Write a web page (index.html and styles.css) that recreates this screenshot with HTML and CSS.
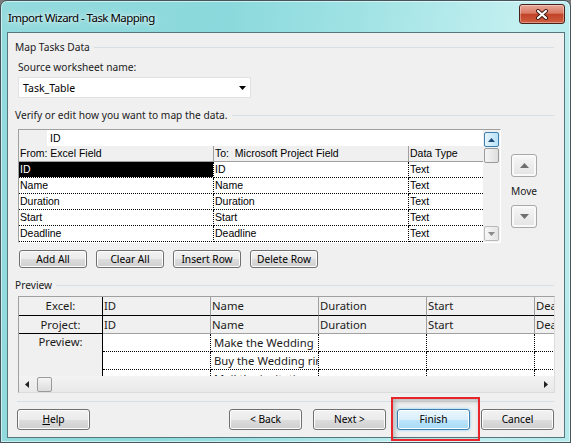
FILE: index.html
```html
<!DOCTYPE html>
<html lang="en">
<head>
  <meta charset="utf-8">
  <title>Import Wizard - Task Mapping</title>
  <link rel="stylesheet" href="styles.css">
</head>
<body>
  <div class="window">
    <div class="titlebar">
      <span class="title">Import Wizard - Task Mapping</span>
      <div class="close">
        <svg width="14" height="11" viewBox="0 0 14 11">
          <path d="M3 2 L11 9 M11 2 L3 9" stroke="#3a1810" stroke-width="4" stroke-linecap="round"/>
          <path d="M3 2 L11 9 M11 2 L3 9" stroke="#fff" stroke-width="2.2" stroke-linecap="round"/>
        </svg>
      </div>
    </div>

    <div class="client">
      <!-- Source sheet -->
      <div class="group-title first">Map Tasks Data</div>
      <div class="field-label">Source worksheet name:</div>
      <div class="combo">
        <span>Task_Table</span>
        <svg width="7" height="4" viewBox="0 0 7 4"><path d="M0 0 H7 L3.5 4 Z" fill="#000"/></svg>
      </div>

      <!-- Field mapping -->
      <div class="group-title">Verify or edit how you want to map the data.</div>
      <div class="mapping">
        <div class="map-grid">
          <div class="map-body">
            <div class="edit-row">
              <div class="edit-corner"></div>
              <div class="edit-value">ID</div>
            </div>
            <div class="map-row map-head">
              <div class="col-from">From: Excel Field</div>
              <div class="col-to">To:  Microsoft Project Field</div>
              <div class="col-type">Data Type</div>
            </div>
            <div class="map-row">
              <div class="col-from selected">ID</div>
              <div class="col-to">ID</div>
              <div class="col-type">Text</div>
            </div>
            <div class="map-row">
              <div class="col-from">Name</div>
              <div class="col-to">Name</div>
              <div class="col-type">Text</div>
            </div>
            <div class="map-row">
              <div class="col-from">Duration</div>
              <div class="col-to">Duration</div>
              <div class="col-type">Text</div>
            </div>
            <div class="map-row">
              <div class="col-from">Start</div>
              <div class="col-to">Start</div>
              <div class="col-type">Text</div>
            </div>
            <div class="map-row">
              <div class="col-from">Deadline</div>
              <div class="col-to">Deadline</div>
              <div class="col-type">Text</div>
            </div>
          </div>
          <div class="vscroll">
            <div class="sb-btn sb-hot">
              <svg width="7" height="4" viewBox="0 0 7 4"><path d="M0 4 H7 L3.5 0 Z" fill="#1d4a78"/></svg>
            </div>
            <div class="sb-thumb"></div>
            <div class="sb-track"></div>
            <div class="sb-btn">
              <svg width="7" height="4" viewBox="0 0 7 4"><path d="M0 0 H7 L3.5 4 Z" fill="#8a8a8a"/></svg>
            </div>
          </div>
        </div>

        <div class="move">
          <div class="move-btn">
            <svg width="9" height="5" viewBox="0 0 9 5"><path d="M0 5 H9 L4.5 0 Z" fill="#707070"/></svg>
          </div>
          <div class="move-label">Move</div>
          <div class="move-btn">
            <svg width="9" height="5" viewBox="0 0 9 5"><path d="M0 0 H9 L4.5 5 Z" fill="#707070"/></svg>
          </div>
        </div>
      </div>

      <div class="grid-buttons">
        <button class="btn btn-small">Add All</button>
        <button class="btn btn-small">Clear All</button>
        <button class="btn btn-small">Insert Row</button>
        <button class="btn btn-small">Delete Row</button>
      </div>

      <!-- Preview -->
      <div class="group-title">Preview</div>
      <div class="preview">
        <div class="preview-view">
          <div class="pcol pcol-head">
            <div class="pc-excel">Excel:</div>
            <div class="pc-project">Project:</div>
            <div class="pc-preview">Preview:</div>
          </div>
          <div class="pcol">
            <div class="pc-excel">ID</div>
            <div class="pc-project">ID</div>
            <div class="pc-data"></div>
            <div class="pc-data"></div>
            <div class="pc-data"></div>
          </div>
          <div class="pcol">
            <div class="pc-excel">Name</div>
            <div class="pc-project">Name</div>
            <div class="pc-data">Make the Wedding</div>
            <div class="pc-data">Buy the Wedding rings</div>
            <div class="pc-data">Mail the invitations</div>
          </div>
          <div class="pcol">
            <div class="pc-excel">Duration</div>
            <div class="pc-project">Duration</div>
            <div class="pc-data"></div>
            <div class="pc-data"></div>
            <div class="pc-data"></div>
          </div>
          <div class="pcol">
            <div class="pc-excel">Start</div>
            <div class="pc-project">Start</div>
            <div class="pc-data"></div>
            <div class="pc-data"></div>
            <div class="pc-data"></div>
          </div>
          <div class="pcol">
            <div class="pc-excel">Deadline</div>
            <div class="pc-project">Deadline</div>
            <div class="pc-data"></div>
            <div class="pc-data"></div>
            <div class="pc-data"></div>
          </div>
        </div>
        <div class="hscroll">
          <svg width="4" height="7" viewBox="0 0 4 7"><path d="M4 0 V7 L0 3.5 Z" fill="#222"/></svg>
          <div class="hs-thumb"></div>
          <svg class="hs-right" width="4" height="7" viewBox="0 0 4 7"><path d="M0 0 V7 L4 3.5 Z" fill="#222"/></svg>
        </div>
      </div>

      <div class="separator"></div>

      <div class="footer">
        <button class="btn btn-wide"><u>H</u>elp</button>
        <div class="nav">
          <button class="btn btn-wide">&lt; Back</button>
          <button class="btn btn-wide">Next &gt;</button>
          <div class="finish-wrap">
            <button class="btn btn-wide btn-default">Finish</button>
            <div class="callout"></div>
          </div>
          <button class="btn btn-wide">Cancel</button>
        </div>
      </div>
    </div>
  </div>
</body>
</html>
```

FILE: styles.css
```css
* {
  box-sizing: border-box;
}

body {
  margin: 0;
  background: #7a7a7a;
  font-family: "Noto Sans", "Open Sans", sans-serif;
  font-size: 10.2px;
  color: #1b1b1b;
}

/* Aero frame */
.window {
  width: 571px;
  height: 443px;
  border: 1px solid #44565b;
  border-radius: 7px 7px 0 0;
  background: linear-gradient(100deg, #93dadd 0%, #8bd9dc 35%, #9fe2e4 55%, #c2eff0 80%, #b3e9eb 100%);
  box-shadow: inset 0 0 0 1px rgba(255, 255, 255, 0.55);
  display: flex;
  flex-direction: column;
}

.titlebar {
  height: 31px;
  flex: none;
  display: flex;
  align-items: flex-start;
}

.title {
  margin: 8px 0 0 7px;
  font-size: 11.5px;
  letter-spacing: -0.55px;
  line-height: 18px;
  color: #000;
  text-shadow: 0 0 8px #fff, 0 0 3px rgba(255, 255, 255, 0.8);
}

.close {
  width: 46px;
  height: 20px;
  margin: 3px 5px 0 auto;
  border: 1px solid #4a2018;
  border-radius: 3px;
  background: linear-gradient(#e9a899 0%, #d97a64 45%, #c24328 52%, #cf5e40 100%);
  box-shadow: inset 0 0 0 1px rgba(255, 255, 255, 0.35);
  display: flex;
  align-items: center;
  justify-content: center;
}

/* Dialog body */
.client {
  flex: 1;
  margin: 0 5px 4px 6px;
  border: 1px solid #56767d;
  background: #f0f0f0;
  padding: 0 10px 0 7px;
  display: flex;
  flex-direction: column;
}

.group-title {
  display: flex;
  align-items: center;
  height: 14px;
  line-height: 14px;
  margin-top: 10px;
  white-space: nowrap;
}
.group-title::after {
  content: "";
  flex: 1;
  height: 1px;
  margin-left: 4px;
  background: #d5dfe5;
}
.group-title.first {
  margin-top: 7px;
}

.field-label {
  margin: 6px 0 0 3px;
  line-height: 14px;
}

.combo {
  margin: 3px 0 0 3px;
  width: 233px;
  height: 21px;
  border: 1px solid #e2e2e2;
  background: #fff;
  padding: 0 4px 0 4px;
  display: flex;
  align-items: center;
  justify-content: space-between;
  font-size: 10.5px;
  color: #000;
}

/* Mapping grid */
.mapping {
  display: flex;
  margin: 7px 0 0 3px;
}

.map-grid {
  width: 483px;
  height: 114px;
  border: 1px solid;
  border-color: #a0a0a0 #fff #fff #a0a0a0;
  background: #fff;
  display: flex;
}

.map-body {
  width: 464px;
  font-family: "Liberation Sans", Arial, sans-serif;
  font-size: 10.5px;
  color: #000;
}

.edit-row {
  display: flex;
  height: 16px;
  line-height: 16px;
}
.edit-corner {
  width: 28px;
  background: #f0f0f0;
}
.edit-value {
  flex: 1;
  padding-left: 3px;
}

.map-row {
  display: flex;
  height: 16px;
  line-height: 15px;
}
.map-row > div {
  border-bottom: 1px dotted #000;
  padding-left: 1px;
  white-space: pre;
  overflow: hidden;
}
.col-from,
.col-to {
  width: 195px;
  border-right: 1px dotted #000;
}
.col-type {
  flex: 1;
}
.map-row .selected {
  background: #000;
  background-clip: padding-box;
  color: #fff;
}

.map-head {
  background: #f0f0f0;
}
.map-head > div {
  border-bottom: 1px solid #a0a0a0;
}
.map-head .col-from,
.map-head .col-to {
  border-right: 1px solid #a0a0a0;
}

.vscroll {
  width: 17px;
  padding: 2px 1px 1px 1px;
  background: #f0f0f0;
  display: flex;
  flex-direction: column;
}
.sb-btn {
  height: 15px;
  border: 1px solid #b9b9b9;
  border-radius: 2px;
  background: linear-gradient(90deg, #f7f7f7, #e4e4e4);
  display: flex;
  align-items: center;
  justify-content: center;
}
.sb-btn.sb-hot {
  border-color: #3c7fb1;
  background: linear-gradient(90deg, #e5f5fd, #b9e2f7);
}
.sb-thumb {
  height: 15px;
  margin-top: 1px;
  border: 1px solid #9a9a9a;
  border-radius: 2px;
  background: linear-gradient(90deg, #f5f5f5, #dedede);
}
.sb-track {
  flex: 1;
}

.move {
  width: 26px;
  margin-left: 10px;
}
.move-btn {
  height: 23px;
  margin-top: 7px;
  border: 1px solid #a9a9a9;
  border-radius: 3px;
  background: linear-gradient(#f7f7f7, #e3e3e3);
  box-shadow: inset 0 0 0 2px #f9f9f9;
  display: flex;
  align-items: center;
  justify-content: center;
}
.move-btn:first-child {
  margin-top: 25px;
}
.move-label {
  margin: 7px -6px 0;
  line-height: 14px;
  text-align: center;
}

/* Buttons */
.btn {
  height: 21px;
  padding: 0;
  border: 1px solid #707070;
  border-radius: 3px;
  background: linear-gradient(#f2f2f2 0%, #ebebeb 50%, #dddddd 50%, #cfcfcf 100%);
  box-shadow: inset 0 0 0 1px #fcfcfc;
  font: inherit;
  color: #000;
  line-height: 19px;
  text-align: center;
}
.btn-small {
  width: 68px;
  height: 18px;
  line-height: 16px;
}
.btn-wide {
  width: 73px;
}
.btn-default {
  border-color: #3c7fb1;
  background: linear-gradient(#eaf6fd 0%, #d9f0fc 50%, #bee6fd 50%, #a7d9f5 100%);
  box-shadow: inset 0 0 0 1px #fff, 0 0 3px #7fd0f5;
}

.grid-buttons {
  display: flex;
  gap: 9px;
  margin: 7px 0 0 4px;
}

/* Preview grid */
.preview {
  width: 537px;
  height: 97px;
  margin: 4px 0 0 3px;
  border: 1px solid;
  border-color: #a0a0a0 #dcdcdc #dcdcdc #a0a0a0;
  background: #f0f0f0;
}

.preview-view {
  display: flex;
  height: 79px;
  overflow: hidden;
  font-size: 11.3px;
  color: #1b1b1b;
}

.pcol {
  flex: none;
  width: 108px;
  display: flex;
  flex-direction: column;
}
.pcol > div {
  flex: none;
  white-space: nowrap;
  overflow: hidden;
}
.pc-excel {
  height: 19px;
  line-height: 18px;
  padding-left: 1px;
  border-bottom: 1px solid #000;
  border-right: 1px solid #a0a0a0;
}
.pc-project {
  height: 18px;
  line-height: 17px;
  padding-left: 1px;
  border-bottom: 1px solid #a0a0a0;
  border-right: 1px solid #a0a0a0;
}
.pc-data {
  height: 18px;
  line-height: 17px;
  padding-left: 3px;
  background: #fff;
  border-bottom: 1px dotted #000;
  border-right: 1px dotted #000;
}

.pcol-head {
  width: 84px;
}
.pcol-head > div {
  padding: 0;
  text-align: center;
  border-right: 1px solid #000;
}
.pcol-head .pc-project {
  border-bottom-color: #000;
}
.pcol-head .pc-preview {
  flex: 1;
  line-height: 16px;
}

.hscroll {
  height: 16px;
  padding: 0 6px;
  background: linear-gradient(#f3f3f3, #e9e9e9);
  display: flex;
  align-items: center;
}
.hs-thumb {
  width: 15px;
  height: 15px;
  margin-left: 8px;
  border: 1px solid #9a9a9a;
  border-radius: 2px;
  background: linear-gradient(#f5f5f5, #dcdcdc);
}
.hs-right {
  margin-left: auto;
}

.separator {
  height: 1px;
  width: 537px;
  margin: 8px 0 0 2px;
  background: #d5dfe5;
}

.footer {
  display: flex;
  align-items: flex-start;
  margin-top: 7px;
  padding-left: 2px;
}
.nav {
  margin-left: auto;
  display: flex;
  gap: 11px;
}
.finish-wrap {
  position: relative;
}
.callout {
  position: absolute;
  left: -6px;
  top: -12px;
  width: 89px;
  height: 44px;
  border: 2px solid #e8252b;
  box-shadow: inset 2px 2px 5px rgba(0, 0, 0, 0.25);
  pointer-events: none;
}
```
